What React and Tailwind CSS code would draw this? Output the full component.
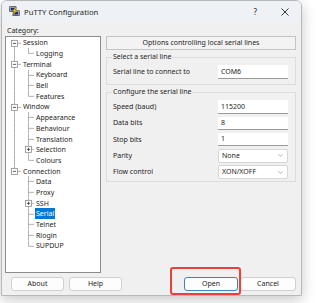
import { ChevronDown } from 'lucide-react'

// tree rows: level 0 = top node, level 1 = child
// box: '-' expanded, '+' collapsed, null none
const TREE = [
  { label: 'Session', level: 0, box: '-' },
  { label: 'Logging', level: 1, last: true },
  { label: 'Terminal', level: 0, box: '-' },
  { label: 'Keyboard', level: 1 },
  { label: 'Bell', level: 1 },
  { label: 'Features', level: 1, last: true },
  { label: 'Window', level: 0, box: '-' },
  { label: 'Appearance', level: 1 },
  { label: 'Behaviour', level: 1 },
  { label: 'Translation', level: 1 },
  { label: 'Selection', level: 1, box: '+' },
  { label: 'Colours', level: 1, last: true },
  { label: 'Connection', level: 0, box: '-', lastTop: true },
  { label: 'Data', level: 1, underLast: true },
  { label: 'Proxy', level: 1, underLast: true },
  { label: 'SSH', level: 1, box: '+', underLast: true },
  { label: 'Serial', level: 1, underLast: true, selected: true },
  { label: 'Telnet', level: 1, underLast: true },
  { label: 'Rlogin', level: 1, underLast: true },
  { label: 'SUPDUP', level: 1, underLast: true, last: true },
]

const H = 10.7
const LINE = '#a0a0a0'

function Box({ cx, sign }) {
  return (
    <g>
      <rect x={cx - 3} y={H / 2 - 3} width="6" height="6" fill="#fff" stroke="#8c8c8c" strokeWidth="0.8" />
      <line x1={cx - 1.6} y1={H / 2} x2={cx + 1.6} y2={H / 2} stroke="#333" strokeWidth="0.8" />
      {sign === '+' && <line x1={cx} y1={H / 2 - 1.6} x2={cx} y2={H / 2 + 1.6} stroke="#333" strokeWidth="0.8" />}
    </g>
  )
}

function Gutter({ row }) {
  const l0 = 8.5
  const l1 = 22.5
  const w = row.level === 0 ? 16 : 29
  return (
    <svg width={w} height={H} className="shrink-0">
      {row.level === 0 ? (
        <>
          {row.label !== 'Session' && <line x1={l0} y1="0" x2={l0} y2={H / 2} stroke={LINE} strokeWidth="0.8" />}
          {!row.lastTop && <line x1={l0} y1={H / 2} x2={l0} y2={H} stroke={LINE} strokeWidth="0.8" />}
          <line x1={l0} y1={H / 2} x2={15} y2={H / 2} stroke={LINE} strokeWidth="0.8" />
          <Box cx={l0} sign={row.box} />
        </>
      ) : (
        <>
          {!row.underLast && <line x1={l0} y1="0" x2={l0} y2={H} stroke={LINE} strokeWidth="0.8" />}
          <line x1={l1} y1="0" x2={l1} y2={row.last ? H / 2 : H} stroke={LINE} strokeWidth="0.8" />
          <line x1={l1} y1={H / 2} x2={28} y2={H / 2} stroke={LINE} strokeWidth="0.8" />
          {row.box && <Box cx={l1} sign={row.box} />}
        </>
      )}
    </svg>
  )
}

function PuttyIcon() {
  return (
    <svg width="11" height="11" viewBox="0 0 16 16">
      <rect x="1" y="1" width="9" height="7" fill="#c8c8c8" stroke="#333" strokeWidth="1" />
      <rect x="2.5" y="2.5" width="6" height="4" fill="#1c2a8a" />
      <rect x="6" y="7" width="9" height="7" fill="#c8c8c8" stroke="#333" strokeWidth="1" />
      <rect x="7.5" y="8.5" width="6" height="4" fill="#1c2a8a" />
      <path d="M9 2 L5 8 L8 8 L5 14 L12 6 L9 6 L11 2 Z" fill="#f5d400" stroke="#6b5a00" strokeWidth="0.6" />
    </svg>
  )
}

function Field({ label, value, select }) {
  return (
    <div className="flex items-center h-[16.25px] pl-[6px] pr-[7px]">
      <span className="flex-1">{label}</span>
      <div className={`w-[70px] h-[13.5px] bg-white flex items-center pl-[3px] pr-[3px] ${select ? 'border border-[#d6d6d6] rounded-[2px]' : 'border-b border-[#9a9a9a]'}`}>
        <span className="flex-1">{value}</span>
        {select && <ChevronDown size={7} color="#777" strokeWidth={2} />}
      </div>
    </div>
  )
}

export default function App() {
  return (
    <div className="w-[320px] h-[303px] bg-white overflow-hidden relative text-[7px] leading-[10px] text-[#1e1e1e]" style={{ fontFamily: '"Noto Sans", sans-serif' }}>
      <div className="ml-[1px] w-[301px] h-[296px] border border-[#b8b8b8] rounded-t-[6px] overflow-hidden flex flex-col shadow-[0_4px_14px_rgba(0,0,0,0.22)]">
        {/* title bar */}
        <div className="h-[21px] bg-[#eef2f6] flex items-center pl-[7px] shrink-0">
          <PuttyIcon />
          <span className="ml-[4px] text-[7.7px] flex-1">PuTTY Configuration</span>
          <span className="text-[8px] mr-[24px]">?</span>
          <svg width="8" height="8" viewBox="0 0 8 8" className="mr-[12px]">
            <path d="M0.5 0.5 L7.5 7.5 M7.5 0.5 L0.5 7.5" stroke="#222" strokeWidth="0.9" />
          </svg>
        </div>

        {/* body */}
        <div className="flex-1 bg-[#f0f0f0] pt-[3px] pl-[3px] pr-[5px] flex flex-col">
          <div className="h-[11px] leading-[11px] pl-[2px]">Category:</div>
          <div className="flex gap-[5px] h-[237px] shrink-0">
            {/* tree */}
            <div className="w-[96px] h-full bg-white border border-[#8c8c8c] pt-[0.5px]">
              {TREE.map(row => (
                <div key={row.label} className="flex items-center h-[10.7px]">
                  <Gutter row={row} />
                  <span className={`px-[1px] leading-[11px] ${row.selected ? 'bg-[#0078d7] text-white' : ''}`}>{row.label}</span>
                </div>
              ))}
            </div>

            {/* right panel */}
            <div className="flex-1 flex flex-col">
              <div className="h-[14px] border border-[#c4c4c4] bg-[#f3f3f3] flex items-center justify-center">
                Options controlling local serial lines
              </div>

              <fieldset className="mt-[2px] border border-[#dcdcdc] px-0 pt-[3px] pb-[5px] m-0">
                <legend className="ml-[5px] px-[1px] leading-[10px]">Select a serial line</legend>
                <div className="flex items-center h-[14px] pl-[6px] pr-[7px]">
                  <span className="flex-1">Serial line to connect to</span>
                  <div className="w-[70px] h-[13.5px] bg-white border-b border-[#9a9a9a] flex items-center pl-[3px]">COM6</div>
                </div>
              </fieldset>

              <fieldset className="mt-[2px] border border-[#dcdcdc] px-0 pt-[2px] pb-[1px] m-0">
                <legend className="ml-[5px] px-[1px] leading-[10px]">Configure the serial line</legend>
                <Field label="Speed (baud)" value="115200" />
                <Field label="Data bits" value="8" />
                <Field label="Stop bits" value="1" />
                <Field label="Parity" value="None" select />
                <Field label="Flow control" value="XON/XOFF" select />
              </fieldset>
            </div>
          </div>

          {/* buttons */}
          <div className="flex items-center mt-[4px] pl-[6px]">
            <button className="w-[53px] h-[14px] bg-[#fdfdfd] border border-[#d0d0d0] rounded-[3px]">About</button>
            <button className="ml-[5px] w-[53px] h-[14px] bg-[#fdfdfd] border border-[#d0d0d0] rounded-[3px]">Help</button>
            <button className="ml-[62px] w-[54px] h-[14px] bg-[#fdfdfd] border border-[#3b82c8] rounded-[3px]">Open</button>
            <button className="ml-[2px] w-[56px] h-[14px] bg-[#fdfdfd] border border-[#d0d0d0] rounded-[3px]">Cancel</button>
          </div>
        </div>
      </div>

      {/* red highlight over Open */}
      <div className="absolute left-[170px] top-[267px] w-[71px] h-[28px] border-2 border-[#e8413c] rounded-[3px]" />
    </div>
  )
}
